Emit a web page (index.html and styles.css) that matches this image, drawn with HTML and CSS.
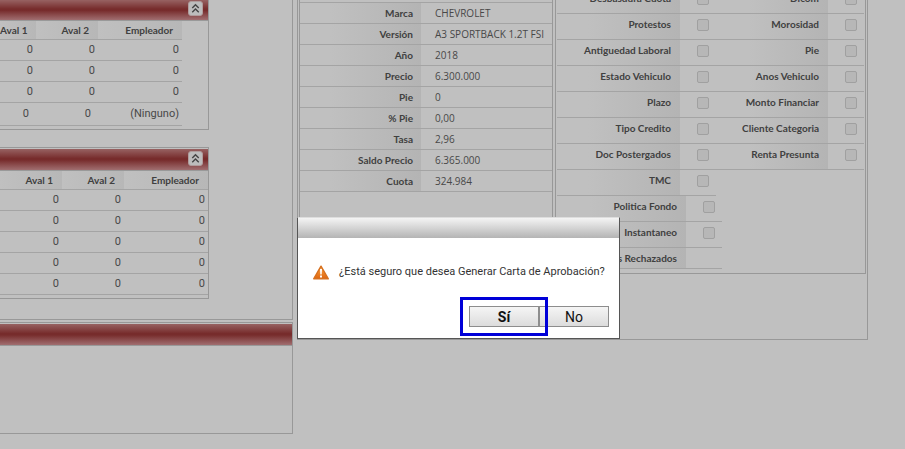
FILE: index.html
```html
<!DOCTYPE html>
<html lang="es">
<head>
<meta charset="utf-8">
<title>Carta de Aprobación</title>
<link rel="stylesheet" href="styles.css">
</head>
<body>
<main class="page">
  <div class="left">
    <div class="stack">
      <section class="panel">
        <header class="bar"><button class="collapse" aria-label="Contraer"><svg viewBox="0 0 14 14"><path d="M3.500 6.500 7 3 10.500 6.500M3.500 11 7 7.500 10.500 11"/></svg></button></header>
        <table class="grid narrow">
          <tr><th>Aval 1</th><th>Aval 2</th><th>Empleador</th></tr>
          <tr><td>0</td><td>0</td><td>0</td></tr>
          <tr><td>0</td><td>0</td><td>0</td></tr>
          <tr><td>0</td><td>0</td><td>0</td></tr>
          <tr class="tall"><td>0</td><td>0</td><td>(Ninguno)</td></tr>
        </table>
      </section>
      <section class="panel framed">
        <header class="bar"><button class="collapse" aria-label="Contraer"><svg viewBox="0 0 14 14"><path d="M3.500 6.500 7 3 10.500 6.500M3.500 11 7 7.500 10.500 11"/></svg></button></header>
        <table class="grid wide">
          <tr><th>Aval 1</th><th>Aval 2</th><th>Empleador</th></tr>
          <tr><td>0</td><td>0</td><td>0</td></tr>
          <tr><td>0</td><td>0</td><td>0</td></tr>
          <tr><td>0</td><td>0</td><td>0</td></tr>
          <tr><td>0</td><td>0</td><td>0</td></tr>
          <tr><td>0</td><td>0</td><td>0</td></tr>
        </table>
      </section>
    </div>
    <section class="empty framed"><header class="bar"></header></section>
  </div>
  <div class="right">
    <section class="facts">
      <table class="details">
        <tr><th>Marca</th><td>CHEVROLET</td></tr>
        <tr><th>Versión</th><td>A3 SPORTBACK 1.2T FSI</td></tr>
        <tr><th>Año</th><td>2018</td></tr>
        <tr><th>Precio</th><td>6.300.000</td></tr>
        <tr><th>Pie</th><td>0</td></tr>
        <tr><th>% Pie</th><td>0,00</td></tr>
        <tr><th>Tasa</th><td>2,96</td></tr>
        <tr><th>Saldo Precio</th><td>6.365.000</td></tr>
        <tr><th>Cuota</th><td>324.984</td></tr>
      </table>
    </section>
    <section class="checks">
      <div class="row"><label for="c1">Desbasdura Cuota</label><input id="c1" type="checkbox"><label for="d1">Dicom</label><input id="d1" type="checkbox"></div>
      <div class="row"><label for="c2">Protestos</label><input id="c2" type="checkbox"><label for="d2">Morosidad</label><input id="d2" type="checkbox"></div>
      <div class="row"><label for="c3">Antiguedad Laboral</label><input id="c3" type="checkbox"><label for="d3">Pie</label><input id="d3" type="checkbox"></div>
      <div class="row"><label for="c4">Estado Vehiculo</label><input id="c4" type="checkbox"><label for="d4">Anos Vehiculo</label><input id="d4" type="checkbox"></div>
      <div class="row"><label for="c5">Plazo</label><input id="c5" type="checkbox"><label for="d5">Monto Financiar</label><input id="d5" type="checkbox"></div>
      <div class="row"><label for="c6">Tipo Credito</label><input id="c6" type="checkbox"><label for="d6">Cliente Categoria</label><input id="d6" type="checkbox"></div>
      <div class="row"><label for="c7">Doc Postergados</label><input id="c7" type="checkbox"><label for="d7">Renta Presunta</label><input id="d7" type="checkbox"></div>
      <div class="row half"><label for="c8">TMC</label><input id="c8" type="checkbox"></div>
      <div class="row half long"><label for="c9">Politica Fondo</label><input id="c9" type="checkbox"></div>
      <div class="row half long"><label for="c10">Instantaneo</label><input id="c10" type="checkbox"></div>
      <div class="row half long last"><span class="name">s Rechazados</span></div>
    </section>
  </div>
</main>
<div class="dialog" role="alertdialog" aria-labelledby="question">
  <div class="titlebar"></div>
  <div class="message">
    <svg class="warning" viewBox="0 0 16 15" aria-hidden="true">
      <defs><linearGradient id="g" x2="0" y2="1"><stop stop-color="#f7b25c"/><stop offset=".5" stop-color="#ee8527"/><stop offset="1" stop-color="#dd6510"/></linearGradient></defs>
      <path d="M8 1.200 15.300 13.800H.7Z" fill="url(#g)" stroke="#d7701f" stroke-width="1.400" stroke-linejoin="round"/>
      <path d="M7 4h2l-.3 5.500H7.300ZM7 10.500h2v2H7Z" fill="#fff"/>
    </svg>
    <p id="question">¿Está seguro que desea Generar Carta de Aprobación?</p>
  </div>
  <div class="actions"><button class="yes">Sí</button><button>No</button></div>
</div>
</body>
</html>
```
FILE: styles.css
```css
* { box-sizing: border-box; }
body { margin: 0; background: #c0c0c0; color: #484848; font: 11px/20px Roboto, sans-serif; overflow: hidden; }
table { border-collapse: separate; border-spacing: 0; table-layout: fixed; }
th, td { padding: 0; white-space: nowrap; border-bottom: 1px solid #a4a4a4; }
th, label, .name { font: bold 10px/18px Lato, sans-serif; color: #404040; }
.page { display: flex; gap: 4px; }
.left { width: 293px; }
.stack { border: 1px solid #989898; border-width: 0 1px 1px 0; padding-bottom: 20px; margin-bottom: 2px; }
.panel { width: 209px; border: 1px solid #989898; border-width: 0 1px 1px 0; padding-bottom: 3px; margin-bottom: 17px; }
.stack .panel:last-child { margin-bottom: 0; }
.framed { border-top: 1px solid #989898; padding-top: 1px; }
.bar { height: 22px; border-bottom: 1px solid #999; background: linear-gradient(#976262, #772c2c 45%, #772c2c 52%, #a06e70); display: flex; justify-content: flex-end; align-items: center; padding-right: 5px; }
.panel:first-child .bar { height: 21px; padding-bottom: 3px; }
.panel.framed .bar { padding-bottom: 2px; }
.collapse { width: 15px; height: 15px; padding: 0; border: 1px solid #b09c9c; border-radius: 3px; background: #bdbdbd; display: flex; }
.collapse svg { width: 13px; height: 13px; fill: none; stroke: #444; stroke-width: 1.500px; }
.grid { text-align: right; }
.grid th { height: 19px; padding-right: 9px; background: linear-gradient(90deg, #c0c0c0, #b7b7b7); text-align: right; }
.grid td { height: 21px; padding-right: 3px; }
.narrow { width: 182px; }
.wide { width: 208px; }
.grid th:nth-child(2) { width: 62px; }
.grid th:nth-child(3) { width: 84px; }
.narrow .tall td { height: 23px; padding-right: 7px; }
.narrow .tall td:last-child { padding-right: 3px; }
.empty { border: 1px solid #989898; border-left: 0; height: 112px; }
.right { flex: none; width: 571px; height: 340px; border: 1px solid #989898; border-top: 0; display: flex; gap: 2px; padding: 0 1px; }
.facts { width: 254px; border: 1px solid #989898; border-width: 0 1px; }
.details { width: 100%; border-top: 1px solid #a4a4a4; margin-top: 2px; }
.details th { width: 121px; height: 21px; padding-right: 8px; text-align: right; background: linear-gradient(90deg, #c0c0c0 25%, #b4b4b4); }
.details td { padding-left: 14px; font-family: "Open Sans", sans-serif; font-size: 10px; }
.checks { width: 311px; height: 274px; border: 1px solid #989898; border-top: 0; padding: 0 1px; }
.row { display: flex; height: 26px; border-bottom: 1px solid #a4a4a4; }
.row:first-child { margin-top: -12px; }
.row label, .name { flex: none; width: 123px; padding: 1px 9px 0 0; text-align: right; background: linear-gradient(90deg, #c0c0c0 25%, #b4b4b4); }
.row input { flex: none; appearance: none; width: 12px; height: 12px; margin: 5px 13px 0 17px; border: 1px solid #a0a0a0; border-radius: 2px; background: #b7b7b7; }
.row label:nth-of-type(2) { width: 106px; }
.row input:nth-of-type(2) { margin-right: 0; }
.half { width: 159px; }
.long { width: 165px; }
.long label, .long .name { width: 129px; }
.last { height: 21px; }
.dialog { position: absolute; left: 297px; top: 217px; width: 323px; border: 1px solid #555; border-top-color: #ddd; background: #fff; color: #333; padding-bottom: 11px; }
.titlebar { height: 20px; background: linear-gradient(#f4f4f4, #b4b4b4); }
.message { display: flex; align-items: center; gap: 10px; padding: 24px 15px 0; }
.message p { margin: 0; white-space: nowrap; }
.warning { width: 16px; height: 15px; flex: none; }
.actions { display: flex; justify-content: flex-end; padding: 24px 10px 0 0; }
.actions button { width: 70px; height: 21px; padding: 0; border: 1px solid #8d8d8d; background: linear-gradient(#f5f5f5, #dcdcdc); font: 14px/18px Roboto, sans-serif; color: #111; }
.actions .yes { position: relative; font-weight: bold; outline: 3px solid #0000d8; outline-offset: 6px; }
```
